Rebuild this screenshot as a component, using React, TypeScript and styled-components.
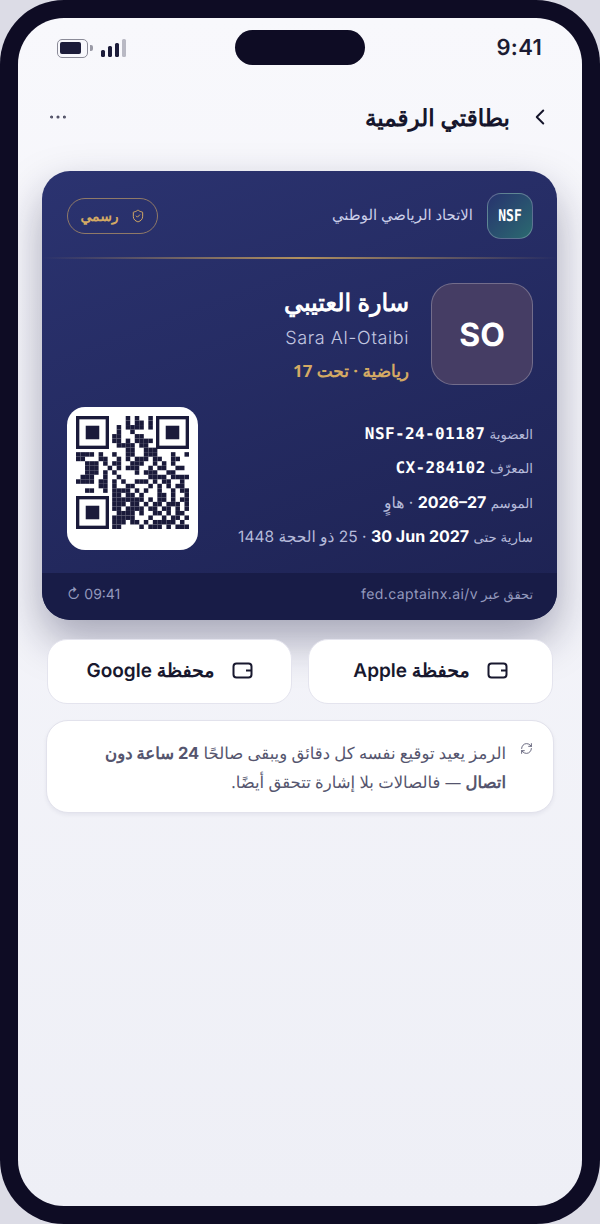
import React from "react";
import styled, { createGlobalStyle } from "styled-components";
import { ChevronLeft, Ellipsis, RefreshCw, ShieldCheck } from "lucide-react";

const QR = [
  "0000000 00001010010 0000000",
  "0000000 00001011010 0000000",
  "0000000 00101111010 0000000",
  "0000000 00100100000 0000000",
  "0000000 01100011000 0000000",
  "0000000 01101011110 0000000",
  "0000000 00111101100 0000000",
  "0000000 00001100111 0000000",
  "1111010 01001100111 0001001",
  "1100011 00101011101 1001100",
  "0011101 01100111001 0101000",
  "0011100 10101110010 1100110",
  "0011101 01000010111 0011000",
  "0111001 00100000011 1101111",
  "1111011 01010011101 0110010",
  "0000011 01001100010 1010110",
  "0011001 01111010100 1001011",
  "0000000 01101101000 1101001",
  "0000000 01111111010 1101011",
  "0000000 01110110101 1011101",
  "0000000 01101111011 0110101",
  "0000000 00111101001 1010110",
  "0000000 01111100010 0101101",
  "0000000 01110110101 1111010",
  "0000000 01100001011 1010111",
];

const FINDERS = [
  [0, 0],
  [17.7, 0],
  [0, 17.7],
];

const GlobalStyle = createGlobalStyle`
  html, body {
    margin: 0;
    padding: 0;
    background: #dcdce6;
  }
  body {
    font-family: Inter, "Noto Sans", sans-serif;
    text-rendering: geometricPrecision;
  }
`;

const WalletIcon = () => (
  <svg width="21" height="21" viewBox="0 0 21 21" fill="none" stroke="currentColor" strokeWidth="2">
    <rect x="1.5" y="3.5" width="18" height="14" rx="3" />
    <path d="M19 10.5h-5" />
  </svg>
);

export default function App() {
  return (
    <>
      <GlobalStyle />
      <Phone>
        <Screen dir="rtl">
          <Island />
          <StatusBar dir="ltr">
            <StatusLeft>
              <Battery>
                <BatteryFill />
              </Battery>
              <BatteryCap />
              <Signal>
                <Bar $h={7} />
                <Bar $h={11} />
                <Bar $h={14} />
                <Bar $h={18} $off />
              </Signal>
            </StatusLeft>
            <Time>9:41</Time>
          </StatusBar>

          <Header>
            <HeaderTitle>
              <ChevronLeft size={26} strokeWidth={1.8} color="#15152b" />
              <Title>بطاقتي الرقمية</Title>
            </HeaderTitle>
            <Ellipsis size={22} strokeWidth={1.4} color="#4a4a60" />
          </Header>

          <Card>
            <CardTop>
              <Federation>
                <Logo>
                  <LogoText>NSF</LogoText>
                </Logo>
                <FederationName>الاتحاد الرياضي الوطني</FederationName>
              </Federation>
              <OfficialBadge>
                <ShieldCheck size={14} strokeWidth={1.7} />
                <span>رسمي</span>
              </OfficialBadge>
            </CardTop>
            <GoldLine />

            <Identity>
              <Avatar>SO</Avatar>
              <NameBlock>
                <NameAr>سارة العتيبي</NameAr>
                <NameEn>Sara Al-Otaibi</NameEn>
                <Category>رياضية · تحت 17</Category>
              </NameBlock>
            </Identity>

            <Details>
              <InfoList>
                <InfoRow>
                  <Label>العضوية</Label> <Mono>NSF-24-01187</Mono>
                </InfoRow>
                <InfoRow>
                  <Label>المعرّف</Label> <Mono>CX-284102</Mono>
                </InfoRow>
                <InfoRow>
                  <Label>الموسم</Label> <Strong dir="ltr">2026–27</Strong> · هاوٍ
                </InfoRow>
                <InfoRow>
                  <Label>سارية حتى</Label> <Strong dir="ltr">30 Jun 2027</Strong> · 25 ذو الحجة 1448
                </InfoRow>
              </InfoList>
              <QrBox>
                <svg width="113" height="113" viewBox="0 0 25 25">
                  {QR.flatMap((row, y) =>
                    row
                      .replace(/ /g, "")
                      .split("")
                      .map((c, x) =>
                        c === "1" ? <rect key={`${x}-${y}`} x={x} y={y} width="1" height="1" fill="#1a1a3a" /> : null
                      )
                  )}
                  {FINDERS.map(([x, y]) => (
                    <g key={`${x}-${y}`} fill="#1a1a3a">
                      <rect x={x + 0.37} y={y + 0.37} width="6.56" height="6.56" fill="none" stroke="#1a1a3a" strokeWidth="0.74" />
                      <rect x={x + 2.15} y={y + 2.15} width="3" height="3" />
                    </g>
                  ))}
                </svg>
              </QrBox>
            </Details>

            <CardFooter>
              <span>
                تحقق عبر <FooterLink>fed.captainx.ai/v</FooterLink>
              </span>
              <FooterTime dir="ltr">↻ 09:41</FooterTime>
            </CardFooter>
          </Card>

          <Wallets>
            <WalletButton>
              <WalletIcon />
              <span>محفظة Apple</span>
            </WalletButton>
            <WalletButton>
              <WalletIcon />
              <span>محفظة Google</span>
            </WalletButton>
          </Wallets>

          <Note>
            <RefreshCw size={13} strokeWidth={1.6} color="#55556e" style={{ flexShrink: 0, marginTop: 4 }} />
            <NoteText>
              الرمز يعيد توقيع نفسه كل دقائق ويبقى صالحًا <b>24 ساعة دون اتصال</b> — فالصالات بلا إشارة تتحقق أيضًا.
            </NoteText>
          </Note>
        </Screen>
      </Phone>
    </>
  );
}

const Phone = styled.div`
  width: 600px;
  height: 1224px;
  box-sizing: border-box;
  padding: 18px;
  background: #0e0c24;
  border-radius: 64px;
`;

const Screen = styled.div`
  position: relative;
  height: 1188px;
  box-sizing: border-box;
  padding: 0 25px 0 24px;
  background: linear-gradient(180deg, #f8f8fc 0%, #eeeff6 100%);
  border-radius: 46px;
  overflow: hidden;
`;

const Island = styled.div`
  position: absolute;
  top: 12px;
  left: 217px;
  width: 130px;
  height: 35px;
  border-radius: 18px;
  background: #0e0c24;
`;

const StatusBar = styled.div`
  display: flex;
  align-items: center;
  justify-content: space-between;
  height: 60px;
  padding: 0 15px;
`;

const StatusLeft = styled.div`
  display: flex;
  align-items: center;
`;

const Battery = styled.div`
  box-sizing: border-box;
  width: 31px;
  height: 19px;
  padding: 2.5px 6px 2.5px 2px;
  border: 1.5px solid #8b8b98;
  border-radius: 5px;
`;

const BatteryFill = styled.div`
  height: 100%;
  background: #1c1c3a;
  border-radius: 2px;
`;

const BatteryCap = styled.div`
  width: 2.5px;
  height: 6px;
  margin: 0 8px 0 2px;
  background: #9a9aa6;
  border-radius: 0 2px 2px 0;
`;

const Signal = styled.div`
  display: flex;
  align-items: flex-end;
  gap: 2.5px;
  height: 18px;
`;

const Bar = styled.div<{ $h: number; $off?: boolean }>`
  width: 4.5px;
  height: ${(p) => p.$h}px;
  background: ${(p) => (p.$off ? "#b9b9c4" : "#1c1c3a")};
  border-radius: 1.5px;
`;

const Time = styled.div`
  font-size: 22px;
  font-weight: 600;
  letter-spacing: 0.3px;
  color: #1c1c33;
`;

const Header = styled.div`
  display: flex;
  align-items: center;
  justify-content: space-between;
  height: 40px;
  margin-top: 19px;
  padding: 0 4px 0 5px;
`;

const HeaderTitle = styled.div`
  display: flex;
  align-items: center;
  gap: 17px;
`;

const Title = styled.h1`
  margin: 0;
  font-family: "Noto Sans", sans-serif;
  font-size: 23px;
  font-weight: 700;
  color: #16162c;
`;

const Card = styled.div`
  width: 515px;
  margin-top: 34px;
  background: linear-gradient(160deg, #2b3370 0%, #1d2252 100%);
  border-radius: 28px;
  box-shadow: 0 20px 44px rgba(20, 20, 60, 0.35);
  overflow: hidden;
  color: #fff;
`;

const CardTop = styled.div`
  display: flex;
  align-items: center;
  justify-content: space-between;
  padding: 22px 24px 18px 25px;
`;

const Federation = styled.div`
  display: flex;
  align-items: center;
  gap: 14px;
`;

const Logo = styled.div`
  display: flex;
  align-items: center;
  justify-content: center;
  box-sizing: border-box;
  width: 46px;
  height: 46px;
  border: 1.5px solid rgba(255, 255, 255, 0.25);
  border-radius: 14px;
  background: linear-gradient(135deg, #27336e 0%, #2b6a70 100%);
`;

const LogoText = styled.span`
  display: inline-block;
  font-family: "DejaVu Sans Mono", monospace;
  font-size: 13px;
  font-weight: 700;
  transform: scaleY(1.25);
`;

const FederationName = styled.div`
  margin-bottom: 3px;
  font-family: "Noto Sans", sans-serif;
  font-size: 14.9px;
  font-weight: 500;
  color: #ccd0ea;
`;

const OfficialBadge = styled.div`
  display: flex;
  align-items: center;
  justify-content: center;
  gap: 12px;
  box-sizing: border-box;
  width: 91px;
  height: 36px;
  border: 1.5px solid rgba(212, 170, 100, 0.6);
  border-radius: 18px;
  color: #d4aa64;
  font-family: "Noto Sans", sans-serif;
  font-size: 14px;
  font-weight: 700;
`;

const GoldLine = styled.div`
  height: 2px;
  background: linear-gradient(90deg, transparent, #c9a15d 50%, transparent);
  opacity: 0.85;
`;

const Identity = styled.div`
  display: flex;
  align-items: flex-start;
  gap: 22px;
  padding: 24px 24px 0;
`;

const Avatar = styled.div`
  display: flex;
  align-items: center;
  justify-content: center;
  box-sizing: border-box;
  width: 102px;
  height: 102px;
  border: 1.5px solid rgba(255, 255, 255, 0.25);
  border-radius: 22px;
  background: #453d64;
  font-size: 32px;
  font-weight: 700;
`;

const NameBlock = styled.div`
  display: flex;
  flex-direction: column;
  padding-top: 1px;
`;

const NameAr = styled.div`
  font-family: "Noto Sans", sans-serif;
  font-size: 24px;
  font-weight: 700;
  line-height: 38px;
`;

const NameEn = styled.div`
  direction: ltr;
  text-align: right;
  margin-top: 4px;
  font-size: 18px;
  font-weight: 300;
  letter-spacing: 0.6px;
  line-height: 26px;
  color: #c2c6e0;
`;

const Category = styled.div`
  margin-top: 8px;
  font-family: "Noto Sans", sans-serif;
  font-size: 16.9px;
  font-weight: 700;
  line-height: 22px;
  color: #d4aa64;
`;

const Details = styled.div`
  display: flex;
  align-items: flex-start;
  justify-content: space-between;
  padding: 22px 24px 23px 25px;
`;

const InfoList = styled.div`
  display: flex;
  flex-direction: column;
  gap: 9.8px;
  padding-top: 15px;
`;

const InfoRow = styled.div`
  height: 24.5px;
  font-family: Inter, "Noto Sans", sans-serif;
  font-size: 15.5px;
  line-height: 24.5px;
  white-space: nowrap;
  color: #b6bbda;
`;

const Label = styled.span`
  font-size: 13.3px;
`;

const Mono = styled.b`
  font-family: "DejaVu Sans Mono", monospace;
  font-size: 16px;
  letter-spacing: 0.4px;
  color: #fff;
`;

const Strong = styled.b`
  display: inline-block;
  font-family: Inter, sans-serif;
  font-size: 16px;
  line-height: 1;
  color: #fff;
`;

const QrBox = styled.div`
  display: flex;
  justify-content: center;
  box-sizing: border-box;
  width: 131px;
  height: 143px;
  padding-top: 9px;
  background: #fff;
  border-radius: 18px;
`;

const CardFooter = styled.div`
  display: flex;
  align-items: center;
  justify-content: space-between;
  box-sizing: border-box;
  height: 47px;
  padding: 0 24px 5px 25px;
  background: #181c47;
  font-family: "Noto Sans", sans-serif;
  font-size: 13px;
  color: #9499bd;
`;

const FooterLink = styled.span`
  font-family: Inter, sans-serif;
  font-size: 14px;
  letter-spacing: 0.4px;
`;

const FooterTime = styled.span`
  font-family: Inter, sans-serif;
  font-size: 14px;
`;

const Wallets = styled.div`
  display: grid;
  grid-template-columns: 245px 245px;
  gap: 16px;
  margin: 19px 4px 0 0;
`;

const WalletButton = styled.div`
  display: flex;
  align-items: center;
  justify-content: center;
  gap: 17px;
  height: 65px;
  padding-bottom: 2px;
  background: #fff;
  border: 1px solid #e4e4ee;
  border-radius: 20px;
  box-sizing: border-box;
  font-family: Inter, "Noto Sans", sans-serif;
  font-size: 19px;
  font-weight: 600;
  color: #18182e;
`;

const Note = styled.div`
  display: flex;
  align-items: flex-start;
  gap: 14px;
  box-sizing: border-box;
  width: 508px;
  height: 93px;
  margin: 16px 3px 0 0;
  padding: 17px 20px 0 34px;
  background: #fff;
  border: 1px solid #e2e2ec;
  border-radius: 22px;
  box-shadow: 0 2px 4px rgba(20, 20, 60, 0.06);
`;

const NoteText = styled.div`
  font-family: "Noto Sans", sans-serif;
  font-size: 16.5px;
  line-height: 29px;
  color: #55556e;

  b {
    font-family: Inter, "Noto Sans", sans-serif;
    font-weight: 700;
    line-height: 1;
  }
`;
